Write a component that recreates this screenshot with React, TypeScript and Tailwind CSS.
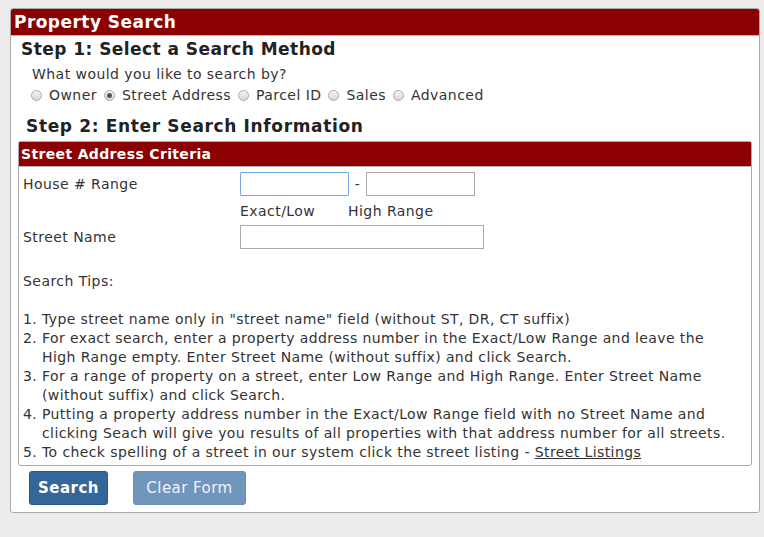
import React from "react";

const font = { fontFamily: '"DejaVu Sans", Verdana, sans-serif' };

function Radio({ checked = false, label }: { checked?: boolean; label: string }) {
  return (
    <label className="flex items-center gap-[7px] mr-[7px]">
      <span className="flex items-center justify-center w-[11px] h-[11px] rounded-full border border-[#a9a9a9] bg-gradient-to-b from-[#f4f4f4] to-[#d8d8d8]">
        {checked && <span className="w-[5px] h-[5px] rounded-full bg-[#555]" />}
      </span>
      <span>{label}</span>
    </label>
  );
}

const tips: { n: string; lines: string[] }[] = [
  { n: "1.", lines: ['Type street name only in "street name" field (without ST, DR, CT suffix)'] },
  {
    n: "2.",
    lines: [
      "For exact search, enter a property address number in the Exact/Low Range and leave the",
      "High Range empty. Enter Street Name (without suffix) and click Search.",
    ],
  },
  {
    n: "3.",
    lines: [
      "For a range of property on a street, enter Low Range and High Range. Enter Street Name",
      "(without suffix) and click Search.",
    ],
  },
  {
    n: "4.",
    lines: [
      "Putting a property address number in the Exact/Low Range field with no Street Name and",
      "clicking Seach will give you results of all properties with that address number for all streets.",
    ],
  },
];

export default function App() {
  return (
    <div className="min-h-screen bg-[#ececec] pt-[8px] text-[#333] tracking-[0.45px]" style={font}>
      <div className="ml-[10px] w-[750px] h-[505px] bg-white border border-[#aaa] rounded-[3px] flex flex-col">
        <div className="h-[27px] bg-[#8b0000] border-b border-[#b5b5b5] rounded-t-[2px] px-[3px] flex items-center">
          <h1 className="text-white font-bold text-[17px] leading-none">Property Search</h1>
        </div>

        <div className="pl-[10px] pt-[2px]">
          <h2 className="font-bold text-[17px] leading-[22px] text-[#222]">Step 1: Select a Search Method</h2>
          <p className="pl-[11px] mt-[4px] text-[14px] leading-[20px]">What would you like to search by?</p>
          <div className="pl-[10px] mt-[1px] flex items-center text-[14px] leading-[20px]">
            <Radio label="Owner" />
            <Radio label="Street Address" checked />
            <Radio label="Parcel ID" />
            <Radio label="Sales" />
            <Radio label="Advanced" />
          </div>
          <h2 className="pl-[5px] mt-[10px] font-bold text-[17px] leading-[22px] text-[#222] tracking-[0.65px]">
            Step 2: Enter Search Information
          </h2>
        </div>

        <div className="ml-[7px] mt-[4px] w-[734px] border border-[#aaa] rounded-[3px] text-[14px]">
          <div className="h-[25px] bg-[#8b0000] border-b border-[#b5b5b5] px-[2px] flex items-center">
            <h3 className="text-white font-bold text-[14px] leading-none tracking-[0.35px]">Street Address Criteria</h3>
          </div>

          <div className="px-[4px] pt-[5px] pb-[3px]">
            <div className="flex items-center h-[24px]">
              <span className="w-[217px]">House # Range</span>
              <input
                autoFocus
                className="w-[109px] h-[24px] border border-[#7aa7e6] rounded-[1px] outline-none px-[2px]"
              />
              <span className="w-[17px] text-center">-</span>
              <input className="w-[109px] h-[24px] border border-[#aaa] outline-none px-[2px]" />
            </div>
            <div className="flex mt-[3px] leading-[24px]">
              <span className="w-[217px]" />
              <span className="w-[108px]">Exact/Low</span>
              <span>High Range</span>
            </div>
            <div className="flex items-center h-[24px] mt-[2px]">
              <span className="w-[217px]">Street Name</span>
              <input className="w-[244px] h-[24px] border border-[#aaa] outline-none px-[2px]" />
            </div>

            <p className="mt-[23px] leading-[19px]">Search Tips:</p>

            <ol className="mt-[19px] leading-[19px] tracking-[0.4px]">
              {tips.map((t) => (
                <li key={t.n} className="flex">
                  <span className="w-[19px] shrink-0">{t.n}</span>
                  <span>
                    {t.lines.map((l) => (
                      <span key={l} className="block whitespace-nowrap">
                        {l}
                      </span>
                    ))}
                  </span>
                </li>
              ))}
              <li className="flex">
                <span className="w-[19px] shrink-0">5.</span>
                <span className="whitespace-nowrap">
                  To check spelling of a street in our system click the street listing -{" "}
                  <a href="#" className="underline text-[#333]">
                    Street Listings
                  </a>
                </span>
              </li>
            </ol>
          </div>
        </div>

        <div className="flex gap-[25px] ml-[18px] mt-[5px]">
          <button className="w-[79px] h-[34px] bg-[#336699] border border-[#2a5885] rounded-[3px] text-white font-bold text-[15px]">
            Search
          </button>
          <button className="w-[113px] h-[34px] bg-[#7096bc] border border-[#6a8fb4] rounded-[3px] text-[#eef3f8] text-[15px]">
            Clear Form
          </button>
        </div>
      </div>
    </div>
  );
}
